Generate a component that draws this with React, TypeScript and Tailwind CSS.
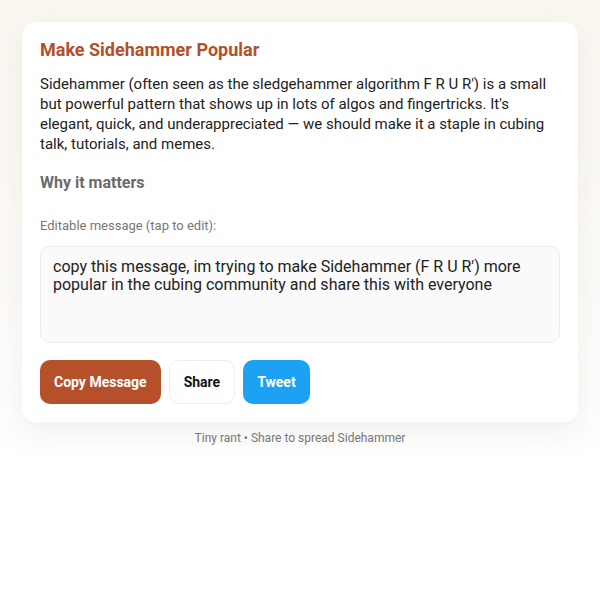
import { useState } from "react";

const initialMessage =
  "copy this message, im trying to make Sidehammer (F R U R') more popular in the cubing community and share this with everyone";

export default function App() {
  const [message, setMessage] = useState(initialMessage);

  return (
    <div className="min-h-screen bg-white font-['Roboto','Liberation_Sans',sans-serif]">
      <div className="bg-gradient-to-b from-[#faf6f0] to-white px-[22px] pt-[22px] pb-[40px]">
        <div className="rounded-[14px] bg-white px-[18px] pt-4 pb-[18px] shadow-[0_10px_30px_rgba(60,40,20,0.07)]">
          <h1 className="text-[18px] leading-[24px] font-bold text-[#b3502b]">
            Make Sidehammer Popular
          </h1>
          <p className="mt-3 text-[15px] leading-[20px] text-[#222]">
            Sidehammer (often seen as the sledgehammer algorithm F R U R') is a
            small but powerful pattern that shows up in lots of algos and
            fingertricks. It's elegant, quick, and underappreciated — we should
            make it a staple in cubing talk, tutorials, and memes.
          </p>

          <h2 className="mt-[18px] text-[16px] leading-[22px] font-bold text-[#6b6b6b]">
            Why it matters
          </h2>

          <label className="mt-[23px] block text-[13px] leading-[18px] text-[#777]">
            Editable message (tap to edit):
          </label>
          <textarea
            value={message}
            onChange={(e) => setMessage(e.target.value)}
            className="mt-[11px] block h-[97px] w-full resize-none rounded-[10px] border border-[#ececec] bg-[#fafafa] px-3 py-[11px] text-[16px] leading-[18px] text-[#222] outline-none"
          />

          <div className="mt-[17px] flex gap-2">
            <button className="h-[44px] rounded-[10px] bg-[#b5502a] px-[14px] text-[14px] font-bold text-white">
              Copy Message
            </button>
            <button className="h-[44px] rounded-[10px] border border-[#eeeeee] bg-white px-[14px] text-[14px] font-bold text-[#111]">
              Share
            </button>
            <button className="h-[44px] rounded-[10px] bg-[#1da1f2] px-[14px] text-[14px] font-bold text-white">
              Tweet
            </button>
          </div>
        </div>

        <p className="mt-[8px] text-center text-[12px] leading-[16px] text-[#777]">
          Tiny rant • Share to spread Sidehammer
        </p>
      </div>
    </div>
  );
}
